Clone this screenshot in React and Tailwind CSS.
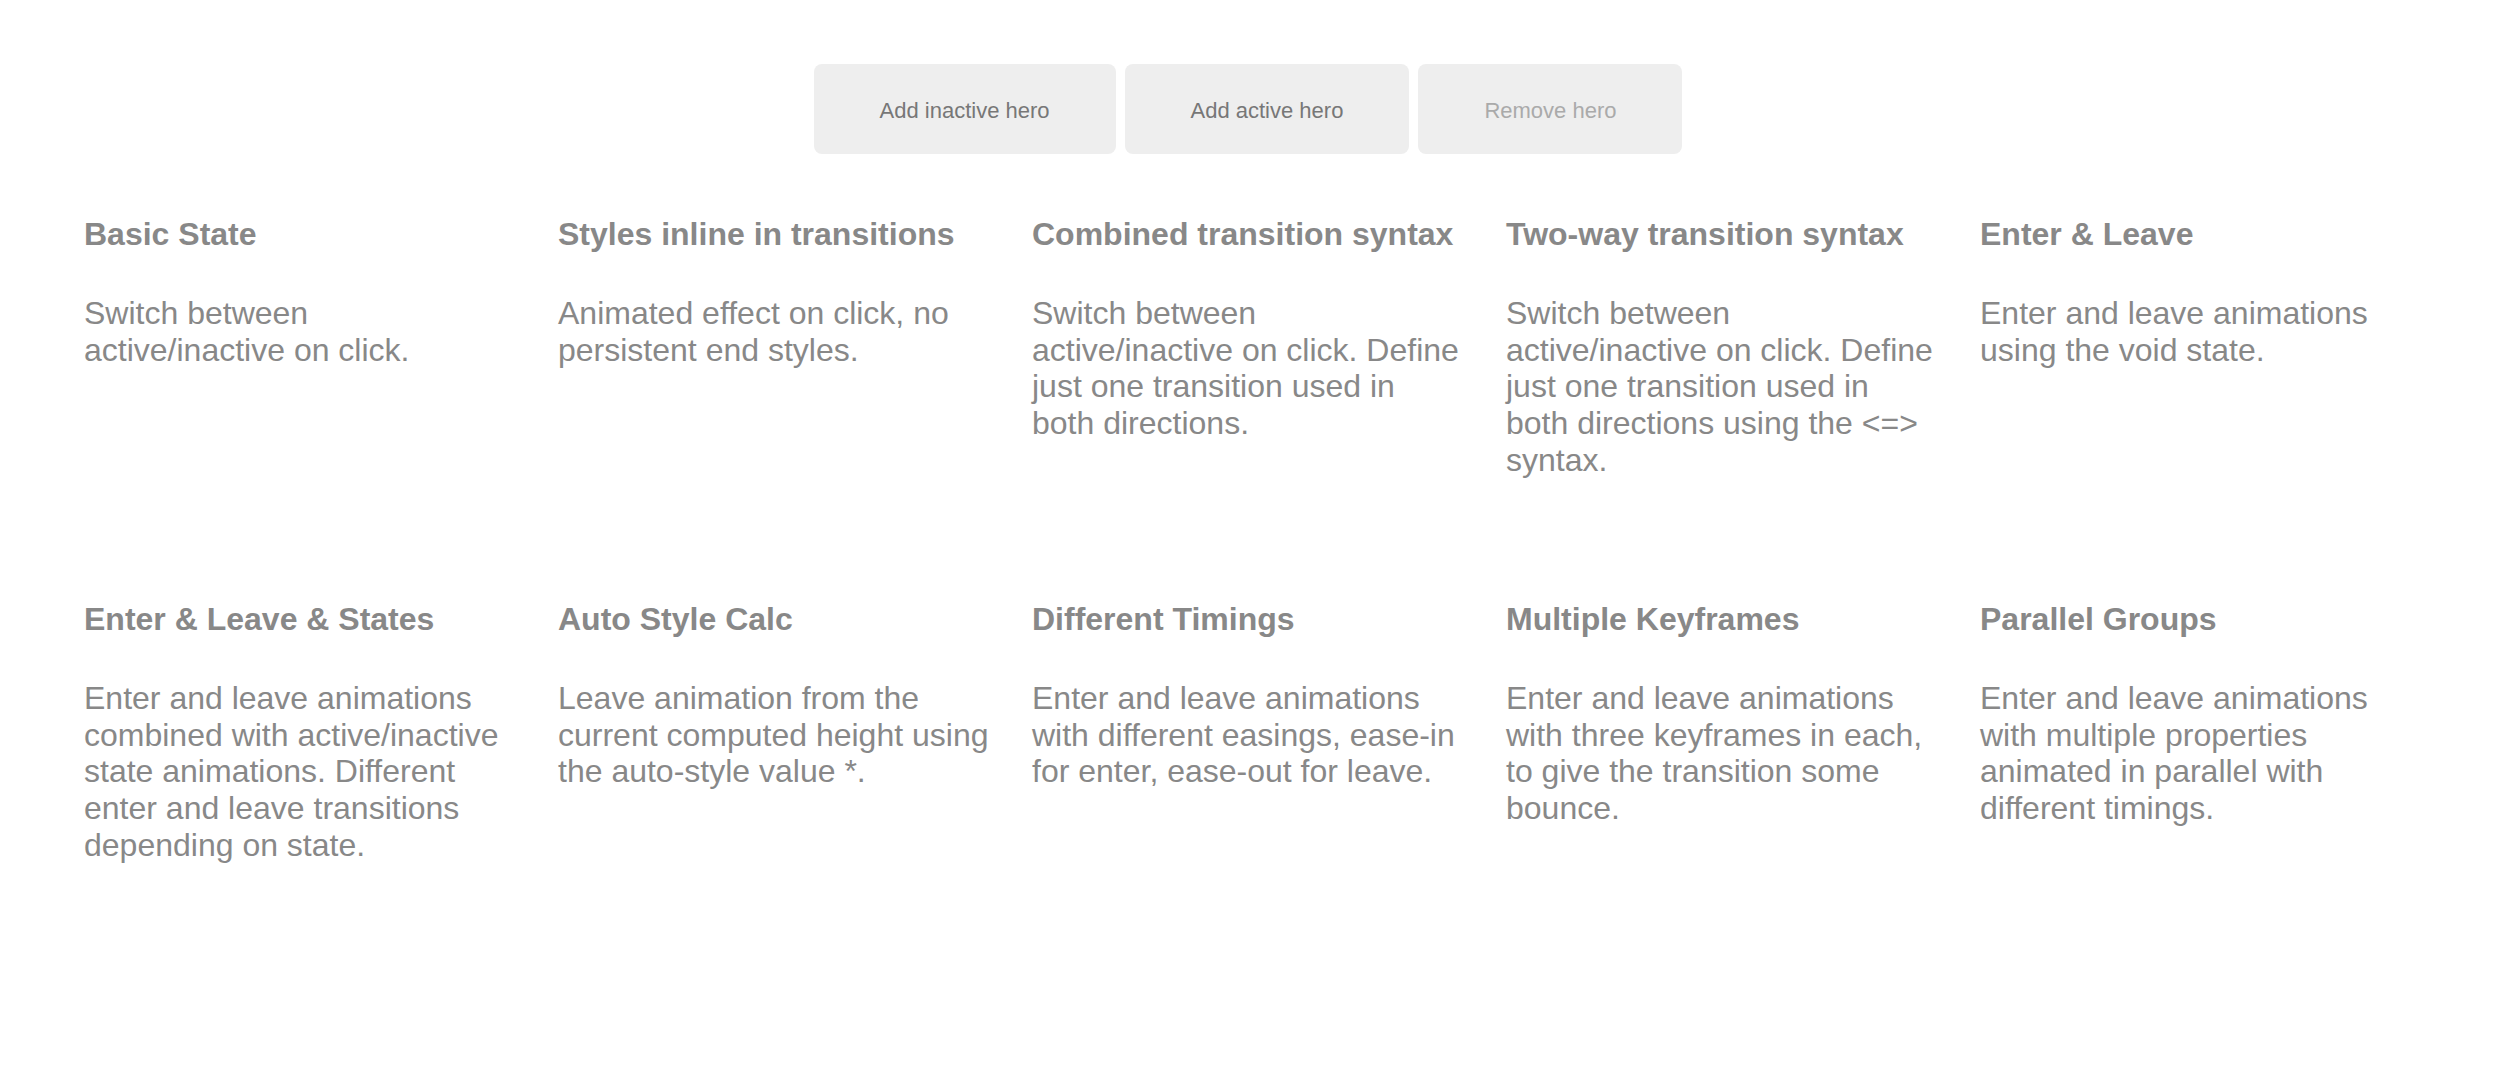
const heroes = [
  {
    title: 'Basic State',
    text: 'Switch between active/inactive on click.',
  },
  {
    title: 'Styles inline in transitions',
    text: 'Animated effect on click, no persistent end styles.',
  },
  {
    title: 'Combined transition syntax',
    text: 'Switch between active/inactive on click. Define just one transition used in both directions.',
  },
  {
    title: 'Two-way transition syntax',
    text: 'Switch between active/inactive on click. Define just one transition used in both directions using the <=> syntax.',
  },
  {
    title: 'Enter & Leave',
    text: 'Enter and leave animations using the void state.',
  },
  {
    title: 'Enter & Leave & States',
    text: 'Enter and leave animations combined with active/inactive state animations. Different enter and leave transitions depending on state.',
  },
  {
    title: 'Auto Style Calc',
    text: 'Leave animation from the current computed height using the auto-style value *.',
  },
  {
    title: 'Different Timings',
    text: 'Enter and leave animations with different easings, ease-in for enter, ease-out for leave.',
  },
  {
    title: 'Multiple Keyframes',
    text: 'Enter and leave animations with three keyframes in each, to give the transition some bounce.',
  },
  {
    title: 'Parallel Groups',
    text: 'Enter and leave animations with multiple properties animated in parallel with different timings.',
  },
];

function HeroButton({ children, disabled }) {
  return (
    <button
      type="button"
      disabled={disabled}
      className={`h-[90px] px-[66px] pt-[3px] rounded-[8px] bg-[#eeeeee] text-[22px] leading-none ${
        disabled ? 'text-[#aaaaaa]' : 'text-[#777777]'
      }`}
    >
      {children}
    </button>
  );
}

export default function App() {
  return (
    <div
      className="min-h-screen bg-white text-[#888888]"
      style={{ fontFamily: '"Liberation Sans", Arial, Helvetica, sans-serif' }}
    >
      {/* Controls */}
      <div className="flex justify-center gap-[9px] pt-[64px]">
        <HeroButton>Add inactive hero</HeroButton>
        <HeroButton>Add active hero</HeroButton>
        <HeroButton disabled>Remove hero</HeroButton>
      </div>

      {/* Hero list */}
      <div className="grid grid-cols-[repeat(5,432px)] auto-rows-[385px] gap-x-[42px] pl-[84px] pt-[62px]">
        {heroes.map((hero) => (
          <div key={hero.title}>
            <h3 className="text-[32px] font-bold leading-[1.15] whitespace-nowrap">{hero.title}</h3>
            <p className="mt-[42px] text-[32px] leading-[1.15]">{hero.text}</p>
          </div>
        ))}
      </div>
    </div>
  );
}
